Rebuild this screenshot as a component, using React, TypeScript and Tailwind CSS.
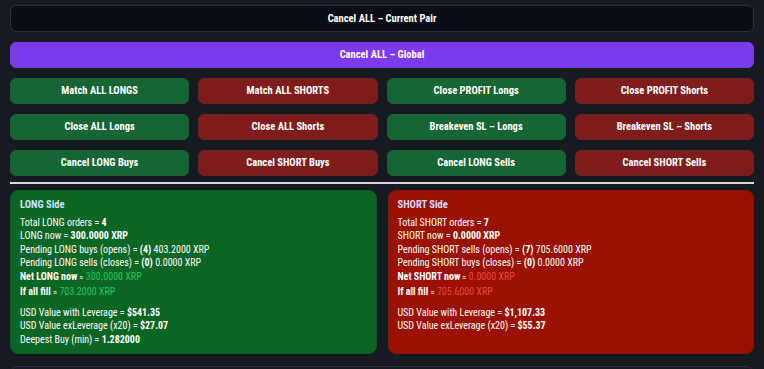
const grid = [
  { label: "Match ALL LONGS", side: "long" },
  { label: "Match ALL SHORTS", side: "short" },
  { label: "Close PROFIT Longs", side: "long" },
  { label: "Close PROFIT Shorts", side: "short" },
  { label: "Close ALL Longs", side: "long" },
  { label: "Close ALL Shorts", side: "short" },
  { label: "Breakeven SL – Longs", side: "long" },
  { label: "Breakeven SL – Shorts", side: "short" },
  { label: "Cancel LONG Buys", side: "long" },
  { label: "Cancel SHORT Buys", side: "short" },
  { label: "Cancel LONG Sells", side: "long" },
  { label: "Cancel SHORT Sells", side: "short" },
];

const App = () => {
  return (
    <div className="h-[369px] overflow-hidden bg-[#161b22] px-[10px] pt-[5px] font-['Roboto_Condensed','Liberation_Sans',sans-serif] text-white">
      <button className="block h-[27px] w-full rounded-md border border-[#2d333b] bg-[#0b0e14] text-[10.5px] font-bold">
        Cancel ALL – Current Pair
      </button>
      <button className="mt-[10px] block h-[26px] w-full rounded-md border border-[#7c3aed] bg-[#7c3aed] text-[10.5px] font-bold">
        Cancel ALL – Global
      </button>

      <div className="mt-[10px] grid grid-cols-4 gap-x-[9px] gap-y-[10px]">
        {grid.map((b) => (
          <button
            key={b.label}
            className={
              b.side === "long"
                ? "h-[26px] rounded-md border border-[#1f5f36] bg-[#166534] text-[10.5px] font-bold"
                : "h-[26px] rounded-md border border-[#6e2424] bg-[#7f1d1d] text-[10.5px] font-bold"
            }
          >
            {b.label}
          </button>
        ))}
      </div>

      <div className="mt-[6px] h-[2px] bg-[#d6d9de]" />

      <div className="mt-[6px] grid grid-cols-2 gap-[11px]">
        <div className="h-[164px] rounded-lg border border-[#0e5a22] bg-[#0b6623] px-[9px] pt-[7px] text-[10px] leading-[13.5px]">
          <div className="mb-[3.5px] text-[10.5px] font-bold leading-[14px] text-[#cfe3ff]">LONG Side</div>
          <div>
            Total LONG orders = <b>4</b>
          </div>
          <div>
            LONG now = <b>300.0000 XRP</b>
          </div>
          <div>
            Pending LONG buys (opens) = <b>(4)</b> 403.2000 XRP
          </div>
          <div>
            Pending LONG sells (closes) = <b>(0)</b> 0.0000 XRP
          </div>
          <div>
            <b>Net LONG now</b> <span className="text-[8px]">≈</span>{" "}
            <span className="text-[#22c55e]">300.0000 XRP</span>
          </div>
          <div className="mt-[0.5px]">
            <b>If all fill</b> <span className="text-[8px]">≈</span>{" "}
            <span className="text-[#22c55e]">703.2000 XRP</span>
          </div>
          <div className="mt-[6.5px]">
            USD Value with Leverage = <b>$541.35</b>
          </div>
          <div>
            USD Value exLeverage (x20) = <b>$27.07</b>
          </div>
          <div>
            Deepest Buy (min) = <b>1.282000</b>
          </div>
        </div>

        <div className="h-[164px] rounded-lg border border-[#8a1208] bg-[#9b1100] px-[9px] pt-[7px] text-[10px] leading-[13.5px]">
          <div className="mb-[3.5px] text-[10.5px] font-bold leading-[14px] text-[#d4dcff]">SHORT Side</div>
          <div>
            Total SHORT orders = <b>7</b>
          </div>
          <div>
            SHORT now = <b>0.0000 XRP</b>
          </div>
          <div>
            Pending SHORT sells (opens) = <b>(7)</b> 705.6000 XRP
          </div>
          <div>
            Pending SHORT buys (closes) = <b>(0)</b> 0.0000 XRP
          </div>
          <div>
            <b>Net SHORT now</b> <span className="text-[8px]">≈</span>{" "}
            <span className="text-[#ef4444]">0.0000 XRP</span>
          </div>
          <div className="mt-[0.5px]">
            <b>If all fill</b> <span className="text-[8px]">≈</span>{" "}
            <span className="text-[#ef4444]">705.6000 XRP</span>
          </div>
          <div className="mt-[6.5px]">
            USD Value with Leverage = <b>$1,107.33</b>
          </div>
          <div>
            USD Value exLeverage (x20) = <b>$55.37</b>
          </div>
        </div>
      </div>

      <div className="mt-[12px] h-[40px] rounded-lg border border-[#2d333b] bg-[#161b22]" />
    </div>
  );
};

export default App;
